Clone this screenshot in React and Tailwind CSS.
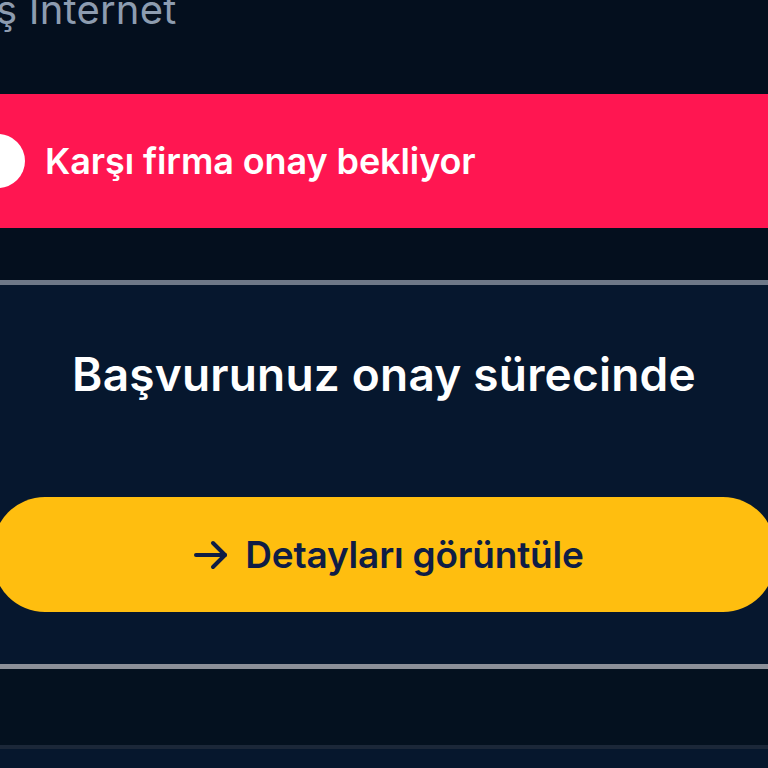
import React from "react";

const font = { fontFamily: "Inter, 'Noto Sans', sans-serif" };

function ArrowRight() {
  return (
    <svg width="36" height="30" viewBox="0 0 36 30" fill="none" stroke="#0f1d45" strokeWidth="4" strokeLinecap="round" strokeLinejoin="round">
      <path d="M3 15h29" />
      <path d="M20 3l12 12-12 12" />
    </svg>
  );
}

export default function App() {
  return (
    <div className="w-[768px] h-[768px] overflow-hidden bg-[#040f1e] flex flex-col" style={font}>
      {/* Header remainder */}
      <div className="h-[94px] shrink-0 relative">
        <div className="-mt-[14px] -ml-[4px] text-[40px] leading-[48px] text-[#8d9cb0] whitespace-nowrap tracking-[0.2px]">
          ş Internet
        </div>
      </div>

      {/* Status banner */}
      <div className="h-[134px] shrink-0 bg-[#ff1651] flex items-center">
        <div className="w-[54px] h-[54px] rounded-full bg-white -ml-[29px] shrink-0" />
        <span className="ml-[20px] text-[36px] font-semibold text-white whitespace-nowrap tracking-[-0.1px]">
          Karşı firma onay bekliyor
        </span>
      </div>

      <div className="h-[52px] shrink-0" />
      <div className="h-[5px] shrink-0 bg-[#6e7888]" />

      {/* Application card */}
      <div className="h-[379px] shrink-0 bg-[#06172e] flex flex-col items-center">
        <h2 className="mt-[61px] text-[46px] leading-[56px] font-semibold text-white whitespace-nowrap tracking-[0.2px]">
          Başvurunuz onay sürecinde
        </h2>
        <button className="mt-[95px] self-start -ml-[7px] w-[782px] h-[115px] rounded-[52px] bg-[#ffbe0f] flex items-center justify-center gap-[16px] pl-[9px] shrink-0">
          <ArrowRight />
          <span className="text-[37px] font-semibold text-[#0f1d45] whitespace-nowrap tracking-[-0.2px]">
            Detayları görüntüle
          </span>
        </button>
      </div>

      <div className="h-[5px] shrink-0 bg-[#8c9099]" />
      <div className="h-[76px] shrink-0 bg-[#04111f]" />
      <div className="h-[4px] shrink-0 bg-[#1b2738]" />
      <div className="flex-1 bg-[#06172d]" />
    </div>
  );
}
